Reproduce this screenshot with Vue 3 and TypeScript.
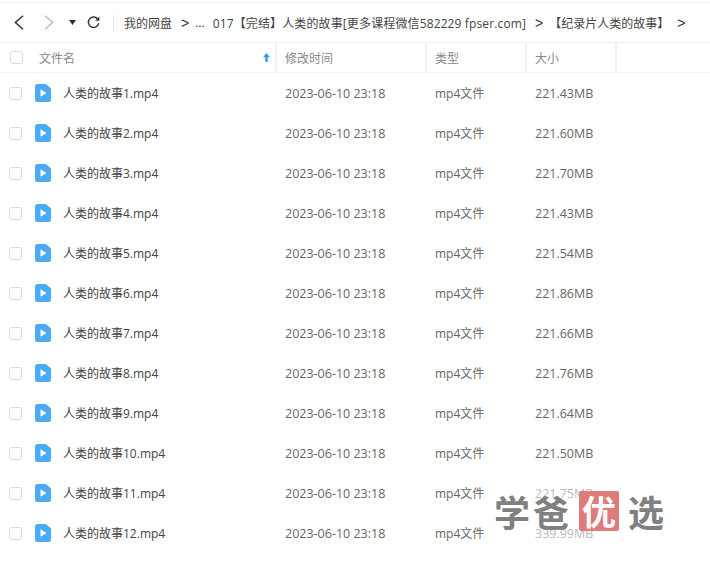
<script setup lang="ts">
interface Row { name: string; size: string }
const rows: Row[] = [
  { name: '人类的故事1.mp4', size: '221.43MB' },
  { name: '人类的故事2.mp4', size: '221.60MB' },
  { name: '人类的故事3.mp4', size: '221.70MB' },
  { name: '人类的故事4.mp4', size: '221.43MB' },
  { name: '人类的故事5.mp4', size: '221.54MB' },
  { name: '人类的故事6.mp4', size: '221.86MB' },
  { name: '人类的故事7.mp4', size: '221.66MB' },
  { name: '人类的故事8.mp4', size: '221.76MB' },
  { name: '人类的故事9.mp4', size: '221.64MB' },
  { name: '人类的故事10.mp4', size: '221.50MB' },
  { name: '人类的故事11.mp4', size: '221.75MB' },
  { name: '人类的故事12.mp4', size: '339.99MB' },
]
</script>

<template>
  <div class="page">
    <div class="toolbar">
      <svg class="nav back" width="10" height="15" viewBox="0 0 10 15"><path d="M9 .7 1.400 7.500 9 14.300" fill="none" stroke="#333" stroke-width="1.5"/></svg>
      <svg class="nav fwd" width="10" height="15" viewBox="0 0 10 15"><path d="M1 .7l7.600 6.800L1 14.300" fill="none" stroke="#bbb" stroke-width="1.5"/></svg>
      <svg class="caret" width="7" height="5" viewBox="0 0 7 5"><path d="M0 0h7L3.500 5z" fill="#333"/></svg>
      <svg class="refresh" width="13" height="13" viewBox="0 0 13 13"><path d="M11 3.500A5.200 5.200 0 1 0 11.700 7.200" fill="none" stroke="#333" stroke-width="1.400"/><path d="M12.400 .6v4.200H8.200z" fill="#333"/></svg>
      <span class="divider"></span>
      <div class="crumbs">
        <span>我的网盘</span><span class="sep s1">&gt;</span><span class="dots">...</span>
        <span class="c2">017【完结】人类的故事[更多课程微信582229 fpser.com]</span><span class="sep s2">&gt;</span>
        <span class="c3">【纪录片人类的故事】</span><span class="sep s3">&gt;</span>
      </div>
    </div>

    <div class="head">
      <div class="col c-name head-name">
        <span class="check"></span>
        <span class="label">文件名</span>
        <svg class="sort" width="7" height="9" viewBox="0 0 7 9"><path d="M3.500 0 7 4.200H4.700V9H2.300V4.200H0z" fill="#2f9bf0"/></svg>
      </div>
      <div class="col c-time">修改时间</div>
      <div class="col c-type">类型</div>
      <div class="col c-size">大小</div>
    </div>

    <div v-for="r in rows" :key="r.name" class="row">
      <div class="col c-name">
        <span class="check"></span>
        <svg class="file" width="16" height="18" viewBox="0 0 16 18"><path d="M2.500 0H11l5 4.500V15.500A2.500 2.500 0 0 1 13.500 18h-11A2.500 2.500 0 0 1 0 15.500v-13A2.500 2.500 0 0 1 2.500 0z" fill="#4daaf7"/><path d="M5.500 5.200l6 3.800-6 3.800z" fill="#fff"/></svg>
        <span class="fname">{{ r.name }}</span>
      </div>
      <div class="col c-time">2023-06-10 23:18</div>
      <div class="col c-type type-text">mp4文件</div>
      <div class="col c-size">{{ r.size }}</div>
    </div>

    <div class="mark">
      <span class="m-ch pair">学爸</span><span class="stamp">优</span><span class="m-ch last">选</span>
    </div>
  </div>
</template>

<style scoped>
.page {
  position: relative;
  width: 710px;
  height: 572px;
  overflow: hidden;
  background: #fff;
  font-family: "Open Sans", "Noto Sans CJK SC", sans-serif;
  font-size: 12.500px;
  color: #666;
}
.toolbar {
  display: flex;
  align-items: center;
  height: 39px;
  margin-top: 2px;
  border-top: 1px solid #f0f0f0;
  border-bottom: 1px solid #eee;
}
.nav.back { margin-left: 14px; }
.nav.fwd { margin-left: 20px; }
.caret { margin-left: 15px; }
.refresh { margin-left: 11px; }
.divider { width: 1px; height: 16px; background: #e6e6e6; margin-left: 13px; }
.crumbs {
  display: flex;
  align-items: center;
  margin-left: 10px;
  color: #444;
  font-size: 12px;
  white-space: nowrap;
}
.sep { color: #333; font-size: 14px; font-family: "Liberation Sans", sans-serif; }
.s1 { margin-left: 9px; }
.dots { margin-left: 6px; }
.c2 { margin-left: 8px; letter-spacing: 0.13px; }
.s2 { margin-left: 9px; }
.c3 { margin-left: 6px; }
.s3 { margin-left: 8px; }
.head {
  display: flex;
  height: 30px;
  box-sizing: border-box;
  border-bottom: 1px solid #f0f0f0;
  color: #888;
  font-size: 12px;
}
.head .col {
  border-right: 2px solid #f2f2f2;
}
.col {
  display: flex;
  align-items: center;
  box-sizing: border-box;
  white-space: nowrap;
}
.c-name { width: 277px; padding-left: 10px; }
.c-time { width: 150px; padding-left: 8px; }
.c-type { width: 100px; padding-left: 8px; }
.c-size { width: 90px; padding-left: 8px; }
.check {
  width: 13px;
  height: 13px;
  box-sizing: border-box;
  border: 1px solid #dcdcdc;
  border-radius: 3px;
  flex: none;
}
.label { margin-left: 16px; }
.sort { margin-left: auto; margin-right: 5px; }
.row {
  display: flex;
  height: 40px;
  color: #666;
}
.row .c-name { padding-left: 9px; }
.type-text { font-size: 12px; }
.file { margin-left: 13px; margin-right: 12px; flex: none; }
.fname { color: #444; font-size: 12px; }
.mark {
  position: absolute;
  left: 490px;
  top: 484px;
  padding: 7px 4px;
  display: flex;
  align-items: center;
  background: rgba(255, 255, 255, 0.55);
  color: #808080;
  font-family: "Noto Sans CJK SC", sans-serif;
  font-size: 36px;
  font-weight: 700;
  line-height: 40px;
}
.pair { letter-spacing: 3px; }
.stamp {
  width: 40px;
  height: 40px;
  margin-left: 7px;
  background: #de7c7c;
  border-radius: 2px;
  color: #fff;
  text-align: center;
  font-size: 34px;
  line-height: 40px;
}
.m-ch.last { margin-left: 9px; }
</style>
